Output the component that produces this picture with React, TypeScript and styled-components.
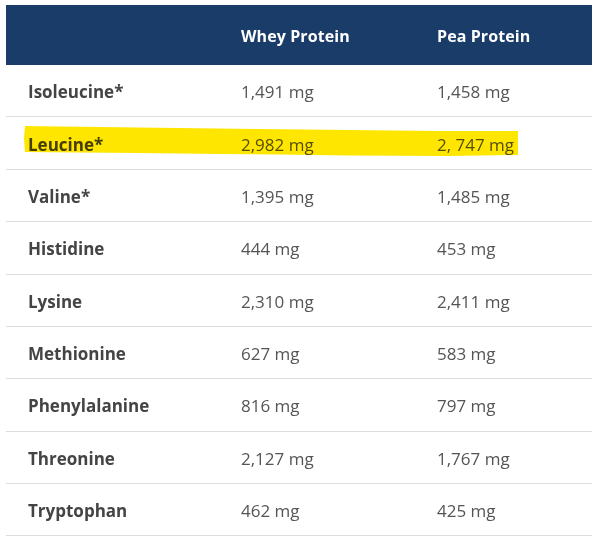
import React from "react";
import styled, { createGlobalStyle } from "styled-components";

const Global = createGlobalStyle`
  html, body { margin: 0; padding: 0; background: #fff; }
  body { font-family: "Open Sans", "Liberation Sans", sans-serif; }
`;

const Wrap = styled.div`
  padding: 5px 6px 0 6px;
  width: 586px;
`;

const Table = styled.div`
  display: grid;
  grid-template-columns: 213px 196px 1fr;
  width: 586px;
`;

const Row = styled.div`
  display: contents;
`;

const HeadCell = styled.div`
  background: #1a3c69;
  color: #fff;
  font-weight: 700;
  font-size: 16px;
  letter-spacing: 0.1px;
  height: 60px;
  display: flex;
  align-items: center;
  padding-left: 22px;
  box-sizing: border-box;
  padding-top: 1px;
`;

const Cell = styled.div<{ $label?: boolean }>`
  position: relative;
  height: 52.375px;
  box-sizing: border-box;
  border-bottom: 1px solid #dddddd;
  display: flex;
  align-items: center;
  padding-left: 22px;
  padding-top: 2px;
  font-size: 17px;
  font-weight: ${(p) => (p.$label ? 700 : 400)};
  color: ${(p) => (p.$label ? "#444444" : "#555555")};
`;

const HighlightRow = styled.div`
  position: relative;
  grid-column: 1 / -1;
  display: grid;
  grid-template-columns: subgrid;
`;

const Marker = styled.svg`
  position: absolute;
  left: 13px;
  top: 9px;
  width: 500px;
  height: 31px;
  mix-blend-mode: multiply;
  pointer-events: none;
`;

const rows: [string, string, string][] = [
  ["Isoleucine*", "1,491 mg", "1,458 mg"],
  ["Leucine*", "2,982 mg", "2, 747 mg"],
  ["Valine*", "1,395 mg", "1,485 mg"],
  ["Histidine", "444 mg", "453 mg"],
  ["Lysine", "2,310 mg", "2,411 mg"],
  ["Methionine", "627 mg", "583 mg"],
  ["Phenylalanine", "816 mg", "797 mg"],
  ["Threonine", "2,127 mg", "1,767 mg"],
  ["Tryptophan", "462 mg", "425 mg"],
];

export default function App() {
  return (
    <>
      <Global />
      <Wrap>
        <Table>
          <Row>
            <HeadCell />
            <HeadCell>Whey Protein</HeadCell>
            <HeadCell>Pea Protein</HeadCell>
          </Row>
          {rows.map(([a, b, c], i) =>
            i === 1 ? (
              <HighlightRow key={a}>
                <Cell $label>{a}</Cell>
                <Cell>{b}</Cell>
                <Cell>{c}</Cell>
                <Marker viewBox="0 0 500 31" preserveAspectRatio="none">
                  <path
                    d="M6 0 L40 0.5 L120 1.5 L240 3 L330 4 L420 5 L499 5 L499 29 L430 30 L330 29.5 L260 28.5 L200 28 L120 27 L60 26.5 L6 26 L5 12 Z"
                    fill="#ffe600"
                  />
                </Marker>
              </HighlightRow>
            ) : (
              <Row key={a}>
                <Cell $label>{a}</Cell>
                <Cell>{b}</Cell>
                <Cell>{c}</Cell>
              </Row>
            )
          )}
        </Table>
      </Wrap>
    </>
  );
}
